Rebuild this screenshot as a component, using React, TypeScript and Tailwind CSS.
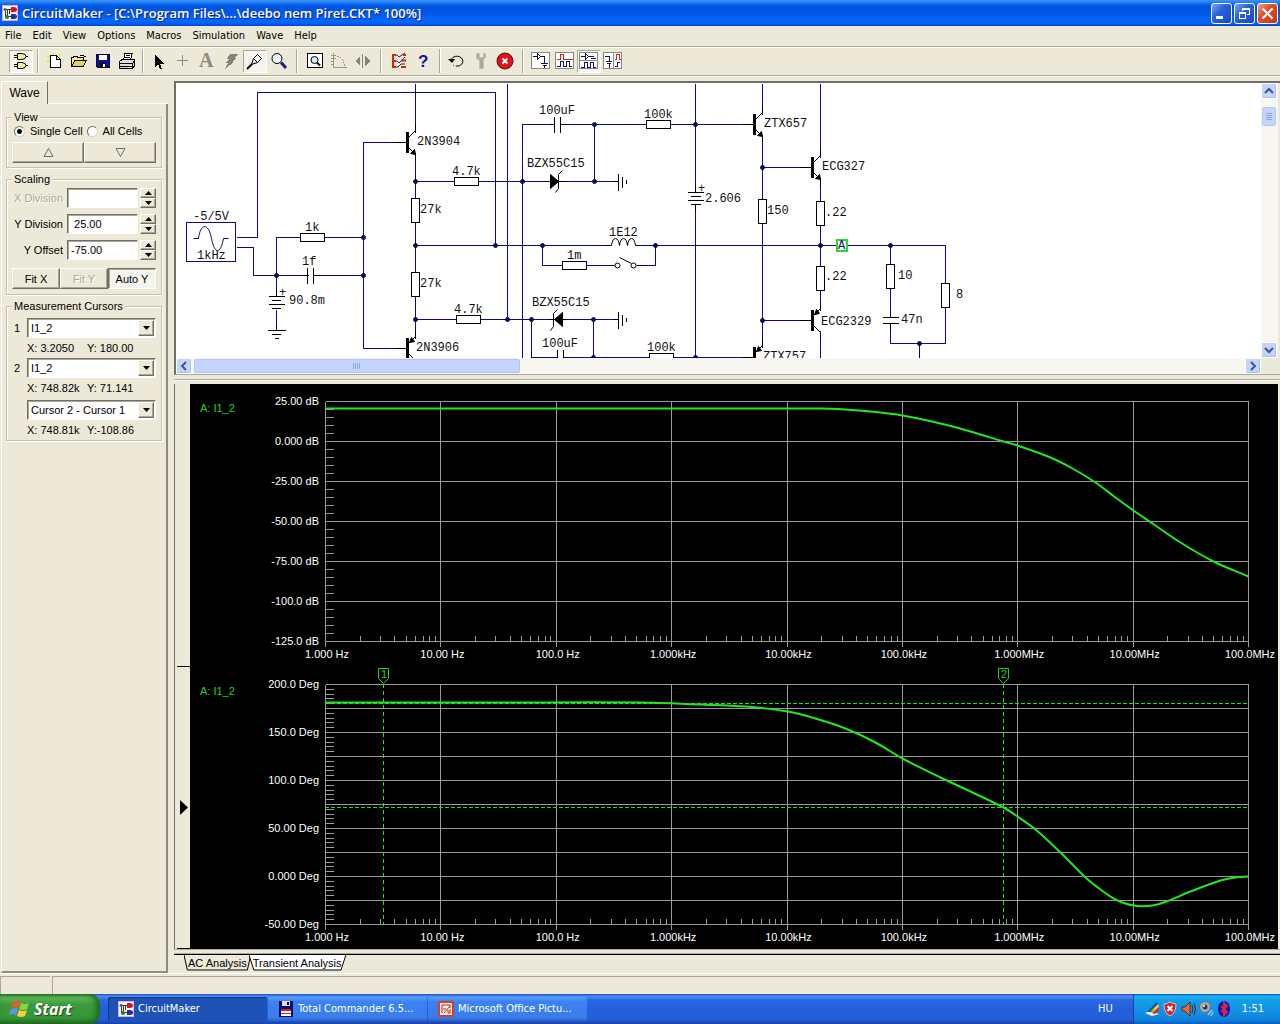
import type { ReactNode } from 'react';

const TAHOMA = "font-['DejaVu_Sans_Condensed','DejaVu_Sans',sans-serif]";
const RAISED = 'border border-t-white border-l-white border-r-[#716f64] border-b-[#716f64] shadow-[inset_-1px_-1px_0_#aca899]';
const SUNKEN = 'border border-t-[#716f64] border-l-[#716f64] border-r-white border-b-white shadow-[inset_1px_1px_0_#aca899]';

/* ---------- small pieces ---------- */

const Icon = ({ children }: { children: ReactNode }) => (
  <svg width="20" height="20" viewBox="0 0 20 20" fill="none" stroke="#000" shapeRendering="crispEdges" className="overflow-visible" aria-hidden="true">
    {children}
  </svg>
);

const AppIcon = () => (
  <svg width="16" height="16" viewBox="0 0 16 16" className="shrink-0" aria-hidden="true">
    <rect width="16" height="16" fill="#fdf1fa" />
    <path d="M0 .5H16M.5 0V16M15.500 0V16M0 15.500H16" stroke="#e7a6dc" />
    <path d="M2 4.500H9M5.500 4V11.500H10M7.500 4V9M3.500 5V12" stroke="#333" fill="none" shapeRendering="crispEdges" />
    <path d="M9 2H12Q15 2.500 15 4.500T12 7H9Z" fill="#d3122c" />
    <path d="M9 9H12Q15 9.500 15 11.500T12 14H9Z" fill="#1b31a8" />
    <circle cx="3" cy="4.500" r="1.500" fill="#18882c" /><circle cx="5" cy="12" r="2" fill="#18882c" />
  </svg>
);

/* ---------- title bar ---------- */

const TitleBar = () => (
  <header className="h-[26px] shrink-0 flex items-center px-0.5 bg-[linear-gradient(#3c95f8_0%,#2583f5_8%,#0054e3_22%,#0056e6_50%,#0266fd_75%,#0361f5_90%,#0043cf_100%)]">
    <AppIcon />
    <h1 className="flex-1 pl-1 whitespace-nowrap text-white font-semibold text-[13px] leading-[20px] font-['Open_Sans','Noto_Sans',sans-serif] [text-shadow:1px_1px_0_#0a1f8a]">
      CircuitMaker - [C:\Program Files\...\deebo nem Piret.CKT* 100%]
    </h1>
    <div className="flex gap-0.5">
      <button aria-label="Minimize" className="size-[21px] rounded-[3px] border border-white bg-[linear-gradient(135deg,#7ba4f2,#2a62dd_40%,#1846c4)]">
        <svg width="19" height="19" viewBox="0 0 19 19"><rect x="4" y="12" width="7" height="3" fill="#fff" /></svg>
      </button>
      <button aria-label="Restore" className="size-[21px] rounded-[3px] border border-white bg-[linear-gradient(135deg,#7ba4f2,#2a62dd_40%,#1846c4)]">
        <svg width="19" height="19" viewBox="0 0 19 19" fill="none" stroke="#fff" shapeRendering="crispEdges">
          <path d="M7 7V4.500H14.500V10.500H12M7 5.500H14" />
          <path d="M4.500 8.500H10.500V14.500H4.500ZM4 9.500H11" />
        </svg>
      </button>
      <button aria-label="Close" className="size-[21px] rounded-[3px] border border-white bg-[linear-gradient(135deg,#f0a088,#e0502a_40%,#c33a0c)]">
        <svg width="19" height="19" viewBox="0 0 19 19" stroke="#fff" strokeWidth="2"><path d="M4.500 4.500L14.500 14.500M14.500 4.500L4.500 14.500" /></svg>
      </button>
    </div>
  </header>
);

const MENU = ['File', 'Edit', 'View', 'Options', 'Macros', 'Simulation', 'Wave', 'Help'];

const MenuBar = () => (
  <nav className={`h-5 shrink-0 flex items-center gap-[11px] px-[5px] text-[11px] leading-[14px] ${TAHOMA}`}>
    {MENU.map((m) => <button key={m}>{m}</button>)}
  </nav>
);

/* ---------- toolbar ---------- */

const Tool = ({ label, on, children }: { label: string; on?: boolean; children: ReactNode }) => (
  <button
    aria-label={label}
    aria-pressed={on}
    className={`w-6 h-[23px] flex items-center justify-center border ${on ? 'bg-[#f6f4ee] border-t-[#aca899] border-l-[#aca899] border-r-white border-b-white' : 'border-transparent'}`}
  >
    <Icon>{children}</Icon>
  </button>
);

const Sep = ({ w }: { w: string }) => (
  <div className={`${w} flex justify-center`}><span className="w-0.5 h-6 border-l border-[#aca899] bg-white" /></div>
);

const PULSE = 'M2 15.500H5.500V10.500H8.500V15.500H11.500V10.500H14.500V15.500H17';

const Toolbar = () => (
  <div className="h-[30px] shrink-0 flex items-center pl-[9px] border-y border-[#aca899] shadow-[inset_0_1px_0_#fff,0_1px_0_#fff]">
    <Tool label="Digital mode" on>
      <path d="M6.500 2.500H11Q15 3 15 5.500T11 8.500H6.500ZM6.500 11.500H11Q15 12 15 14.500T11 17.500H6.500Z" fill="#f6ef9a" shapeRendering="auto" />
      <path d="M3 4.500H6M3 6.500H6M15 5.500H17M3 13.500H6M3 15.500H6M15 14.500H17" />
    </Tool>
    <Sep w="w-2.5" />
    <Tool label="New">
      <path d="M3 5L5 7M2 10H5M4 16L6 14M8 2V4M15 3L13 5M15 13L17 15" stroke="#ecec2c" strokeWidth="2" />
      <path d="M5.500 4.500H11.500L15.500 8.500V16.500H5.500ZM11.500 4.500V8.500H15.500" fill="#fff" />
    </Tool>
    <Tool label="Open">
      <path d="M2.500 15.500V6.500H4L5 5.500H8L9 6.500H14.500V9" fill="#f4ec7c" />
      <path d="M2.500 15.500L6 9.500H17.500L14 15.500Z" fill="#e2d060" /><path d="M11 4.500H14.500L16.500 6" />
    </Tool>
    <Tool label="Save">
      <path d="M3.500 3.500H16.500V16.500H5L3.500 15Z" fill="#10108a" stroke="#00004c" />
      <path d="M6 4H14V9H6Z" fill="#fff" stroke="none" /><path d="M7 12H13V16H7Z" fill="#111" stroke="none" /><path d="M10 13H12V16H10Z" fill="#fff" stroke="none" />
    </Tool>
    <Tool label="Print">
      <path d="M6.500 9.500L8 2.500H15L13.500 9.500Z" fill="#fff" /><path d="M9 4.500H13M8 6.500H13" />
      <path d="M2.500 10.500L5 8.500H17L17.500 10V15L15.500 17.500H2.500Z" fill="#ddd" /><path d="M2 12.500H15.500L17.500 10M15.500 12V17M2 15.500H15" />
    </Tool>
    <Sep w="w-2" />
    <Tool label="Select"><path d="M6 3V16L9 13L11 18H13L11 12.500H15Z" fill="#000" stroke="none" /></Tool>
    <Tool label="Wire"><path d="M9.500 4V15M4 9.500H15" stroke="#8d8b82" /></Tool>
    <Tool label="Text">
      <text x="2" y="16" fill="#8d8b82" stroke="none" fontSize="20" fontWeight="bold" fontFamily="Liberation Serif, serif">A</text>
    </Tool>
    <Tool label="Delete"><path d="M9 3H17L13 7H16L11 11H13L4 18L7 12H5L8 8H6Z" fill="#85837b" stroke="none" /></Tool>
    <Tool label="Probe" on>
      <g shapeRendering="auto"><path d="M2 18L7.500 12.500" strokeWidth="2" /><path d="M6.500 13.500L8.500 7.500L12.500 3.500L16.500 7.500L12.500 11.500ZM8.500 7.500L12.500 11.500" fill="#fff" /></g>
    </Tool>
    <Tool label="Zoom">
      <g shapeRendering="auto"><circle cx="8" cy="7.500" r="5" fill="#e4f6fa" /><path d="M12 11.500L17 17" stroke="#1a1a9c" strokeWidth="3" /></g>
    </Tool>
    <Sep w="w-3" />
    <Tool label="Zoom to fit">
      <path d="M2.500 2.500H17.500V16.500H2.500Z" fill="#fff" />
      <g shapeRendering="auto"><circle cx="9.500" cy="9" r="3.500" fill="#cdeff4" /><path d="M12 11.500L15 14.500" strokeWidth="2" /></g>
    </Tool>
    <Tool label="Rotate"><g stroke="#98968c"><path d="M4.500 2V16.500H18M2 4.500H7M2 7.500H7M2 10.500H5M2 13.500H5" /><path d="M8 5.500Q15 6 15.500 15" strokeDasharray="2 1" /></g></Tool>
    <Tool label="Mirror"><path d="M9.500 3V17" stroke="#85837b" /><path d="M7 5V15L2 10ZM12 5V15L17 10Z" fill="#85837b" stroke="none" /></Tool>
    <Sep w="w-3" />
    <Tool label="Check wiring">
      <path d="M2 3H17V17H2Z" stroke="#f0e68a" strokeDasharray="1 1" />
      <g shapeRendering="auto">
        <path d="M5 4H8L10 6L16 2M5 10H8L10 12L16 6M5 16H9L12 13H16" stroke="#22227c" />
        <path d="M4 4V16M3 4H7M3 10H7M3 16H7M14 4H17M12 9.500H17M12 16H17" stroke="#c8281e" strokeWidth="2" />
      </g>
    </Tool>
    <Tool label="Help"><text x="5" y="16" fill="#15159c" stroke="none" fontSize="17" fontWeight="bold" fontFamily="Liberation Sans, sans-serif">?</text></Tool>
    <Sep w="w-2.5" />
    <Tool label="Reset"><g shapeRendering="auto"><path d="M4.500 8A6 5 0 1 1 6 14" strokeDasharray="24 2" /><path d="M1 8H8L5 12Z" fill="#000" stroke="none" /></g></Tool>
    <Tool label="Step"><path d="M5 2V7L8 9V17H12V9L14 7V2H12V6H8V2Z" fill="#aaa89d" stroke="#c2c0b4" /></Tool>
    <Tool label="Stop"><g shapeRendering="auto"><circle cx="10" cy="10" r="8" fill="#d9141b" stroke="#6d0a0d" /><path d="M7.500 7.500L12.500 12.500M12.500 7.500L7.500 12.500" stroke="#fff" strokeWidth="2" /></g></Tool>
    <Sep w="w-3" />
    <Tool label="Schematic only">
      <path d="M.5 1.500H18.500V17.500H.5Z" fill="#fff" stroke="#888" /><path d="M2 5.500H6M6.500 3V8L10 5.500ZM10 5.500H13.500V12M10 12.500H17M12 14.500H16M13.500 14V17" stroke="#15154a" />
    </Tool>
    <Tool label="Waves only">
      <path d="M.5 1.500H18.500V17.500H.5Z" fill="#fff" stroke="#888" /><path d="M2 8.500H5.500V3.500H8.500V8.500H18" stroke="#d8281e" /><path d={PULSE} stroke="#15155c" />
    </Tool>
    <Tool label="Split horizontally" on>
      <path d="M.5 1.500H18.500V17.500H.5ZM0 9.500H18" fill="#fff" stroke="#888" /><path d="M2 5.500H6M6.500 3V8L10 5.500ZM10 5.500H14.500M12 7.500H17" stroke="#15154a" /><path d="M2 16.500H5.500V11.500H8.500V16.500H11.500V11.500H14.500V16.500H17" stroke="#15155c" />
    </Tool>
    <Tool label="Split vertically">
      <path d="M.5 1.500H18.500V17.500H.5ZM10.500 2V17" fill="#fff" stroke="#888" /><path d="M2 5.500H6.500V10M3 10.500H9M4 12.500H8M6.500 12V17" stroke="#15154a" /><path d="M12 8.500H13.500V3.500H16.500V8.500H18" stroke="#d8281e" /><path d="M12 15.500H14.500V11.500H17" stroke="#15155c" />
    </Tool>
  </div>
);

/* ---------- side panel ---------- */

const Group = ({ title, children }: { title: string; children: ReactNode }) => (
  <fieldset className="min-w-0 border border-[#c4c1b0] shadow-[1px_1px_0_#fff,inset_1px_1px_0_#fff] px-[5px]">
    <legend className="h-3 leading-3 px-0.5 bg-[#ece9d8]">{title}</legend>
    {children}
  </fieldset>
);

const Radio = ({ id, label, checked }: { id: string; label: string; checked?: boolean }) => (
  <span className="flex items-center gap-[5px]">
    <input
      type="radio"
      id={id}
      name="cells"
      defaultChecked={checked}
      className="appearance-none size-[11px] rounded-full bg-white border border-t-[#716f64] border-l-[#716f64] border-r-[#d8d5c8] border-b-[#d8d5c8] checked:bg-[radial-gradient(circle,#000_2px,#fff_3px)]"
    />
    <label htmlFor={id} className="whitespace-nowrap">{label}</label>
  </span>
);

const Arrow = ({ up }: { up?: boolean }) => (
  <svg width="7" height="4" viewBox="0 0 7 4" aria-hidden="true"><path d={up ? 'M0 4H7L3.500 0Z' : 'M0 0H7L3.500 4Z'} /></svg>
);

const Field = ({ id, label, value, off }: { id: string; label: string; value: string; off?: boolean }) => (
  <div className="flex items-center h-5">
    <label htmlFor={id} className={`flex-1 text-right pr-1 whitespace-nowrap ${off ? 'text-[#aca899] [text-shadow:1px_1px_0_#fff]' : ''}`}>{label}</label>
    <input id={id} defaultValue={value} disabled={off} className={`w-[71px] h-5 px-[3px] bg-white ${SUNKEN}`} />
    <span className="ml-0.5 w-4 h-5 flex flex-col">
      <button aria-label={`${label} up`} className={`flex-1 flex items-center justify-center ${RAISED}`}><Arrow up /></button>
      <button aria-label={`${label} down`} className={`flex-1 flex items-center justify-center ${RAISED}`}><Arrow /></button>
    </span>
  </div>
);

const Combo = ({ id, num, name, value }: { id: string; num?: string; name: string; value: string }) => (
  <div className="flex items-center h-5">
    <label htmlFor={id} className="w-[15px] pl-0.5">{num}</label>
    <div className="relative flex-1">
      <select id={id} aria-label={name} className={`block appearance-none w-full h-5 pl-[3px] leading-[18px] bg-white ${SUNKEN}`}><option>{value}</option></select>
      <span className={`absolute right-0.5 top-0.5 w-4 h-4 bg-[#ece9d8] flex items-center justify-center pointer-events-none ${RAISED}`}><Arrow /></span>
    </div>
  </div>
);

const Reading = ({ x, y }: { x: string; y: string }) => (
  <div className="h-5 flex items-center pl-[15px] whitespace-nowrap"><span className="w-[60px]">{x}</span><span>{y}</span></div>
);

const SidePanel = () => (
  <aside className="w-[168px] shrink-0 flex flex-col pl-px text-[11px] leading-[14px] font-['Liberation_Sans',Arial,sans-serif]">
    <div className="flex h-[23px]">
      <button className="w-[47px] text-[12px] border-l border-t border-white border-r border-r-[#716f64]">Wave</button>
      <span className="flex-1 border-b border-white" />
    </div>
    <div className="flex-1 flex flex-col gap-[5px] pt-[7px] pl-1 pr-1 border-l border-l-white border-r-2 border-r-[#8f8c7f] border-b-2 border-b-[#8f8c7f]">
      <Group title="View">
        <div className="flex items-center h-4 gap-1 pl-0.5">
          <Radio id="single" label="Single Cell" checked />
          <Radio id="all" label="All Cells" />
        </div>
        <div className="flex pt-[3px] pb-1">
          <button aria-label="Previous cell" className={`flex-1 h-[21px] flex items-center justify-center ${RAISED}`}>
            <svg width="11" height="9" viewBox="0 0 11 9" fill="none" stroke="#716f64"><path d="M1 8.500H10L5.500 .5Z" /></svg>
          </button>
          <button aria-label="Next cell" className={`flex-1 h-[21px] flex items-center justify-center ${RAISED}`}>
            <svg width="11" height="9" viewBox="0 0 11 9" fill="none" stroke="#716f64"><path d="M1 .5H10L5.500 8.500Z" /></svg>
          </button>
        </div>
      </Group>
      <Group title="Scaling">
        <div className="flex flex-col gap-1.5 pt-[3px]">
          <Field id="xdiv" label="X Division" value="" off />
          <Field id="ydiv" label="Y Division" value=" 25.00" />
          <Field id="yoff" label="Y Offset" value="-75.00" />
        </div>
        <div className="flex pt-2 pb-[5px]">
          <button className={`flex-1 h-[21px] ${RAISED}`}>Fit X</button>
          <button disabled className={`flex-1 h-[21px] text-[#aca899] [text-shadow:1px_1px_0_#fff] ${RAISED}`}>Fit Y</button>
          <button aria-pressed="true" className={`flex-1 h-[21px] whitespace-nowrap bg-[#f6f4ee] ${SUNKEN}`}>Auto Y</button>
        </div>
      </Group>
      <Group title="Measurement Cursors">
        <div className="pt-1.5">
          <Combo id="c1" num="1" name="Cursor 1" value="I1_2" />
          <Reading x="X: 3.2050" y="Y: 180.00" />
          <Combo id="c2" num="2" name="Cursor 2" value="I1_2" />
          <Reading x="X: 748.82k" y="Y: 71.141" />
        </div>
        <div className="pt-0.5">
          <Combo id="c3" name="Difference" value="Cursor 2 - Cursor 1" />
          <Reading x="X: 748.81k" y="Y:-108.86" />
        </div>
      </Group>
    </div>
  </aside>
);

/* ---------- schematic ---------- */

const ResH = ({ x, y }: { x: number; y: number }) => <rect x={x} y={y - 4} width="24" height="8" fill="#fff" />;
const ResV = ({ x, y }: { x: number; y: number }) => <rect x={x - 4} y={y} width="8" height="24" fill="#fff" />;

const Transistor = ({ x, y, pnp }: { x: number; y: number; pnp?: boolean }) => (
  <g shapeRendering="auto">
    <path d={`M${x - 20} ${y}H${x - 8}M${x} ${y - 18}V${y - 12}L${x - 7} ${y - 5}M${x - 7} ${y + 5}L${x} ${y + 12}V${y + 18}`} />
    <rect x={x - 9} y={y - 10} width="2" height="20" fill="#000" />
    <path d={pnp ? `M${x - 6} ${y - 6}L${x - 4} ${y - 11}L${x - 1} ${y - 7}Z` : `M${x} ${y + 12}L${x - 5} ${y + 11}L${x - 1} ${y + 7}Z`} fill="#000" />
  </g>
);

const WIRES = [
  'M236 237H257V92H495V245', 'M236 247H253V275H308M313 275H363', 'M276 290V237H363',
  'M407 142H363V348H407', 'M415 83V348', 'M415 181H618', 'M415 245H610M635 245H945V343H890V324M890 245V317',
  'M415 319H618', 'M507 83V319', 'M554 124H522V358M560 124H754', 'M594 124V181', 'M695 83V188M695 205V358',
  'M542 245V265H614M636 265H655V245', 'M531 319V357H557M563 357H754', 'M593 319V357', 'M762 83V358',
  'M820 83V358', 'M762 167H811M762 320H811', 'M919 343V358', 'M276 309V329',
];

const DOTS = [
  [276, 275], [363, 237], [363, 275], [415, 181], [415, 245], [415, 319], [495, 245], [507, 319], [522, 181], [531, 319],
  [594, 124], [594, 181], [593, 319], [593, 357], [695, 124], [695, 357], [542, 245], [655, 245], [762, 167], [762, 320],
  [820, 245], [890, 245], [919, 343],
];

const PARTS: [number, number, string][] = [
  [193, 220, '-5/5V'], [197, 259, '1kHz'], [305, 231, '1k'], [302, 265, '1f'], [289, 304, '90.8m'], [279, 296, '+'],
  [417, 145, '2N3904'], [452, 175, '4.7k'], [420, 213, '27k'], [420, 287, '27k'], [454, 313, '4.7k'], [416, 351, '2N3906'],
  [539, 114, '100uF'], [527, 167, 'BZX55C15'], [644, 118, '100k'], [705, 202, '2.606'], [698, 192, '+'], [609, 236, '1E12'],
  [567, 259, '1m'], [532, 306, 'BZX55C15'], [542, 347, '100uF'], [647, 351, '100k'], [764, 127, 'ZTX657'], [822, 170, 'ECG327'],
  [767, 214, '150'], [825, 216, '.22'], [825, 280, '.22'], [821, 325, 'ECG2329'], [763, 360, 'ZTX757'], [898, 279, '10'],
  [901, 323, '47n'], [956, 298, '8'],
];

const Schematic = () => (
  <svg width="1085" height="275" viewBox="176 83 1085 275" aria-label="Schematic" className="font-['Liberation_Mono','Courier_New',monospace] text-[12px]">
    <g transform="translate(.5 .5)" fill="none" stroke="#000" shapeRendering="crispEdges">
      <g stroke="#0a0a8c">
        {WIRES.map((d) => <path key={d} d={d} />)}
        <rect x="186" y="222" width="49" height="39" />
        <path d="M193 238H198C200 222 208 222 211 238S220 254 223 238H228" shapeRendering="auto" />
      </g>
      {DOTS.map(([x, y]) => <circle key={`${x}-${y}`} cx={x} cy={y} r="2" fill="#0c0c5c" stroke="#0c0c5c" shapeRendering="auto" />)}
      <ResH x={300} y={237} /><ResH x={454} y={181} /><ResH x={456} y={319} /><ResH x={646} y={124} /><ResH x={562} y={265} /><ResH x={649} y={357} />
      <ResV x={415} y={198} /><ResV x={415} y={272} /><ResV x={762} y={199} /><ResV x={820} y={201} /><ResV x={820} y={266} /><ResV x={890} y={264} /><ResV x={945} y={283} />
      {/* the wires between collector and emitter are hidden under the transistor bodies */}
      <path d="M415 132V152M415 338V358M762 114V134M762 347V358M820 157V177M820 310V330" stroke="#fff" strokeWidth="3" />
      <Transistor x={415} y={142} /><Transistor x={415} y={348} pnp /><Transistor x={762} y={124} /><Transistor x={762} y={357} pnp />
      <Transistor x={820} y={167} /><Transistor x={820} y={320} pnp />
      {/* capacitors */}
      <path d="M307 267V283M313 267V283M302 275H307M313 275H319M554 116V132M560 116V132M549 124H554M560 124H566M557 349V358M563 349V358M882 317H898M882 323H898M890 312V317M890 323V329" />
      {/* batteries */}
      <path d="M268 296H284M271 300H280M268 304H284M271 308H280M276 289V296M687 192H703M690 196H700M687 200H703M690 204H700M695 186V192M695 204V210" />
      {/* grounds */}
      <path d="M276 325V330M267 330H285M271 334H280M274 338H278M613 181H618M618 173V190M622 176V187M626 179V183M613 319H618M618 311V328M622 314V325M626 317V321" />
      {/* zeners */}
      <g shapeRendering="auto">
        <path d="M545 181H566M550 174V188L558 181Z" fill="#000" /><path d="M562 170L558 174V188L555 192" />
        <path d="M548 319H568M562 312V326L554 319Z" fill="#000" /><path d="M557 309L553 313V326L550 330" />
        <path d="M606 245H611Q612 238 615 238T619 245Q620 238 623 238T627 245Q628 238 631 238T635 245H640" />
        <path d="M609 265H614M619 257L631 263M636 265H641" />
        <circle cx="617" cy="265" r="2.500" fill="#fff" /><circle cx="633" cy="265" r="2.500" fill="#fff" />
      </g>
      <rect x="836" y="239" width="10" height="11" fill="#fff" stroke="#2bd82b" strokeWidth="2" />
    </g>
    {PARTS.map(([x, y, t]) => <text key={`${x}-${y}`} x={x} y={y} fill="#111">{t}</text>)}
    <text x="838" y="249" fill="#10107c">A</text>
  </svg>
);

const ScrollButton = ({ label, d }: { label: string; d: string }) => (
  <button aria-label={label} className="size-4 shrink-0 rounded-[2px] border border-white bg-[#c3d5fd] shadow-[inset_-1px_-1px_0_#a9bfee]">
    <svg width="14" height="14" viewBox="0 0 14 14" fill="none" stroke="#3f5683" strokeWidth="2"><path d={d} /></svg>
  </button>
);

const SchematicPane = () => (
  <div className="shrink-0 pr-0.5 bg-[#ece9d8] border-t-2 border-l-2 border-t-[#716f64] border-l-[#716f64] border-b border-b-[#aca899]">
    <div className="flex h-[275px] bg-white">
      <div className="flex-1 min-w-0 overflow-hidden"><Schematic /></div>
      <div className="w-[17px] pr-px flex flex-col bg-[#f7f6f1]">
        <ScrollButton label="Scroll up" d="M3 9L7 5L11 9" />
        <div className="flex-1 pt-2">
          <div className="h-[19px] mx-px rounded-[2px] bg-[#c3d5fd] border border-[#b4c8f6] flex flex-col items-center justify-center gap-px">
            <i className="w-1.5 h-px bg-[#8caae8]" /><i className="w-1.5 h-px bg-[#8caae8]" /><i className="w-1.5 h-px bg-[#8caae8]" /><i className="w-1.5 h-px bg-[#8caae8]" />
          </div>
        </div>
        <ScrollButton label="Scroll down" d="M3 5L7 9L11 5" />
      </div>
    </div>
    <div className="flex h-4 bg-[#f7f6f1]">
      <ScrollButton label="Scroll left" d="M9 3L5 7L9 11" />
      <div className="flex-1 pl-0.5 py-px flex">
        <div className="w-[31%] rounded-[2px] bg-[#c3d5fd] border border-[#b0c6f8] flex items-center justify-center gap-px">
          <i className="h-1.5 w-px bg-[#8caae8]" /><i className="h-1.5 w-px bg-[#8caae8]" /><i className="h-1.5 w-px bg-[#8caae8]" /><i className="h-1.5 w-px bg-[#8caae8]" />
        </div>
      </div>
      <ScrollButton label="Scroll right" d="M5 3L9 7L5 11" />
      <div className="w-[17px] bg-[#ece9d8]" />
    </div>
  </div>
);

/* ---------- wave plots ---------- */

const X0 = 325;
const X1 = 1248;
const DECADE = (X1 - X0) / 8;
const FREQS = ['1.000 Hz', '10.00 Hz', '100.0 Hz', '1.000kHz', '10.00kHz', '100.0kHz', '1.000MHz', '10.00MHz', '100.0MHz'];

const GAIN = [
  [325, 408], [500, 408], [700, 408], [820, 408], [845, 409], [870, 411], [902, 415], [940, 423], [970, 431], [1003, 441], [1017, 445],
  [1050, 457], [1072, 468], [1095, 482], [1115, 497], [1133, 510], [1155, 525], [1180, 542], [1213, 561], [1248, 576],
];
const PHASE = [
  [325, 702], [500, 702], [640, 702], [700, 704], [745, 706], [787, 711], [815, 718], [845, 728], [875, 742], [902, 758], [940, 777], [970, 791],
  [1003, 807], [1017, 816], [1035, 829], [1060, 852], [1085, 877], [1100, 889], [1115, 899], [1133, 905], [1152, 905], [1166, 901], [1190, 891],
  [1220, 880], [1235, 877], [1248, 876],
];

// Catmull-Rom through the sampled points
const smooth = (p: number[][]) => {
  let d = `M${p[0][0]} ${p[0][1]}`;
  for (let i = 0; i < p.length - 1; i++) {
    const a = p[i - 1] ?? p[i];
    const b = p[i];
    const c = p[i + 1];
    const e = p[i + 2] ?? c;
    const k = (c[0] - b[0]) / 3;
    const m1 = (c[1] - a[1]) / (c[0] - a[0]);
    const m2 = (e[1] - b[1]) / (e[0] - b[0]);
    d += `C${b[0] + k} ${b[1] + k * m1} ${c[0] - k} ${c[1] - k * m2} ${c[0]} ${c[1]}`;
  }
  return d;
};

type PlotProps = { top: number; labels: string[]; rows: number; minor: number; points: number[][] };

const Plot = ({ top, labels, rows, minor, points }: PlotProps) => {
  const bottom = top + 240;
  const step = 240 / (labels.length - 1);
  let grid = '';
  for (let i = 0; i <= rows; i++) grid += `M${X0} ${top + (240 / rows) * i}H${X1}`;
  for (let i = 0; i <= 8; i++) grid += `M${Math.round(X0 + DECADE * i)} ${top}V${bottom + 5}`;
  let ticks = '';
  for (let i = 1; i < minor; i++) ticks += `M${X0} ${Math.round(top + (240 / minor) * i)}h8`;
  for (let i = 0; i < 8; i++) {
    for (let n = 2; n < 10; n++) ticks += `M${Math.round(X0 + DECADE * (i + Math.log10(n)))} ${bottom}v-6`;
  }
  return (
    <g>
      <g transform="translate(.5 .5)" fill="none">
        <path d={grid} stroke="#999" shapeRendering="crispEdges" />
        <path d={ticks} stroke="#999" shapeRendering="crispEdges" />
        <path d={smooth(points)} stroke="#1fe81f" strokeWidth="2" />
      </g>
      <text x="200" y={top + 11} fill="#22d022">A: I1_2</text>
      <g fill="#fff">
        {labels.map((l, i) => <text key={l} x="319" y={top + step * i + 4} textAnchor="end">{l}</text>)}
        {FREQS.map((f, i) => <text key={f} x={X0 + DECADE * i + 2} y={bottom + 17} textAnchor="middle">{f}</text>)}
      </g>
    </g>
  );
};

const Cursor = ({ x, n }: { x: number; n: string }) => (
  <g>
    <path transform="translate(.5 .5)" d={`M${x - 5} 668H${x + 5}V678L${x} 683L${x - 5} 678Z`} fill="none" stroke="#22d022" />
    <path transform="translate(.5 0)" d={`M${x} 684V924`} stroke="#22e022" strokeDasharray="4 3" shapeRendering="crispEdges" />
    <text x={x + 1} y="678" fill="#22d022" textAnchor="middle">{n}</text>
  </g>
);

const WavePane = () => (
  <div className="flex-1 min-h-0 flex pl-0.5 border-l border-l-[#716f64]">
    <div className="w-[13px] flex flex-col">
      <div className="flex-1 border-b border-black" />
      <div className="flex-1 border-b border-black flex items-center pl-[3px]">
        <svg width="8" height="15" viewBox="0 0 8 15"><path d="M0 0L8 7.500L0 15Z" /></svg>
      </div>
    </div>
    <div className="flex-1 min-w-0 bg-black mr-0.5 overflow-hidden">
      <svg
        viewBox="190 384 1088 565"
        preserveAspectRatio="xMinYMin meet"
        className="w-full h-full text-[11px] font-['Liberation_Sans',Arial,sans-serif]"
        aria-label="AC analysis"
      >
        <Plot top={401} labels={['25.00 dB', '0.000 dB', '-25.00 dB', '-50.00 dB', '-75.00 dB', '-100.0 dB', '-125.0 dB']} rows={6} minor={30} points={GAIN} />
        <Plot top={684} labels={['200.0 Deg', '150.0 Deg', '100.0 Deg', '50.00 Deg', '0.000 Deg', '-50.00 Deg']} rows={10} minor={50} points={PHASE} />
        <path d={`M${X0} 703.500H${X1}M${X0} 807.500H${X1}`} stroke="#22e022" strokeDasharray="4 2" shapeRendering="crispEdges" />
        <Cursor x={383} n="1" />
        <Cursor x={1003} n="2" />
      </svg>
    </div>
  </div>
);

const SheetTab = ({ label, on }: { label: string; on?: boolean }) => (
  <button className="relative h-4 px-1 -mr-0.5 whitespace-nowrap">
    <svg className="absolute inset-0 w-full h-full" viewBox="0 0 100 16" preserveAspectRatio="none" aria-hidden="true">
      <path d="M0 0L5 15H95L100 0" fill={on ? '#fff' : '#ece9d8'} stroke="#000" vectorEffect="non-scaling-stroke" />
    </svg>
    <span className="relative">{label}</span>
  </button>
);

/* ---------- taskbar ---------- */

const TaskButton = ({ label, on, icon }: { label: string; on?: boolean; icon: ReactNode }) => (
  <button
    className={`w-[159px] h-6 flex items-center gap-1 px-2.5 rounded-[2px] whitespace-nowrap ${on ? 'bg-[#1e52b7] shadow-[inset_1px_1px_1px_#123a8c]' : 'bg-[linear-gradient(#5a9bff,#3c81f0_20%,#3a7dea_85%,#2a62cf)]'}`}
  >
    {icon}
    {label}
  </button>
);

const Taskbar = () => (
  <footer className={`h-[30px] shrink-0 flex items-center text-white text-[11px] leading-[14px] bg-[linear-gradient(#1f4fc0_0%,#4a8ef6_8%,#2a68e4_20%,#245edb_50%,#245edb_85%,#1941a5_100%)] ${TAHOMA}`}>
    <button className="h-full w-[100px] flex items-center gap-1 pl-2 rounded-r-[10px] bg-[linear-gradient(#2f7a2f,#5fb95a_12%,#3c9a3c_35%,#379637_80%,#236b23)] shadow-[inset_-4px_0_6px_#1c6a1c]">
      <svg width="24" height="22" viewBox="0 0 24 22" aria-hidden="true">
        <path d="M5 4Q9 1 12 4L10 10Q7 8 3 10Z" fill="#ea5a2c" />
        <path d="M13 5Q17 7 21 5L19 11Q15 13 11 11Z" fill="#8fd23c" />
        <path d="M3 11Q7 9 10 11L8 17Q5 15 1 17Z" fill="#5b93f2" />
        <path d="M11 12Q15 14 19 12L17 18Q13 20 9 18Z" fill="#f7cf3a" />
      </svg>
      <span className="-ml-0.5 font-bold italic text-[16px] leading-5 font-['Open_Sans','Noto_Sans',sans-serif] [text-shadow:1px_1px_1px_#1a4a1a]">Start</span>
    </button>
    <div className="flex-1 flex gap-px pl-2">
      <TaskButton label="CircuitMaker" on icon={<AppIcon />} />
      <TaskButton
        label="Total Commander 6.5..."
        icon={
          <svg width="16" height="16" viewBox="0 0 16 16" shapeRendering="crispEdges" aria-hidden="true">
            <path d="M1 0H15V16H1Z" fill="#0a0a70" /><path d="M4 0H12V5H4Z" fill="#ddd" /><path d="M9 1H11V4H9Z" fill="#0a0a50" />
            <path d="M3 8H13V15H3Z" fill="#fff" /><path d="M3 8H13V10H3ZM3 12H13V13H3Z" fill="#cf2020" />
          </svg>
        }
      />
      <TaskButton
        label="Microsoft Office Pictu..."
        icon={
          <svg width="16" height="16" viewBox="0 0 16 16" aria-hidden="true">
            <rect width="16" height="16" rx="1" fill="#c8452c" /><rect x="2" y="2" width="12" height="12" fill="#fbe8e2" />
            <path d="M4 12V4H12V7M5 8H8M6 12L12 5M10 9V12H12V8" stroke="#b5301c" fill="none" />
          </svg>
        }
      />
    </div>
    <span className="pr-5">HU</span>
    <div className="h-full flex items-center gap-0.5 pl-2.5 pr-4 border-l border-l-[#0d3f9c] bg-[linear-gradient(#0c59b9,#18b2f2_8%,#139ee9_20%,#1290e8_60%,#0d7fd6_88%,#095bc9)]">
      <svg width="16" height="16" viewBox="0 0 16 16" aria-hidden="true">
        <path d="M1 12L7 10L15 13L8 15Z" fill="#eee" /><path d="M3 11L13 1L14 3L7 11Z" fill="#2434c8" /><path d="M5 12L14 3L15 6L9 12Z" fill="#e8d92c" /><path d="M8 12L15 6V9L11 13Z" fill="#d22" /><path d="M5 11L12 4L8 11Z" fill="#2a2" />
      </svg>
      <svg width="16" height="16" viewBox="0 0 16 16" aria-hidden="true">
        <path d="M8 1Q11 3 14 3Q14 12 8 15Q2 12 2 3Q5 3 8 1Z" fill="#d3202a" stroke="#e9b9b9" /><path d="M5.500 5L10.500 10M10.500 5L5.500 10" stroke="#fff" strokeWidth="2" />
      </svg>
      <svg width="16" height="16" viewBox="0 0 16 16" aria-hidden="true">
        <path d="M2 6H5L10 1V15L5 10H2Z" fill="#e0703a" stroke="#5a2a16" /><path d="M12 4Q14 8 12 12M14 2Q17 8 14 14" stroke="#4a2a20" fill="none" />
      </svg>
      <svg width="16" height="16" viewBox="0 0 16 16" aria-hidden="true">
        <circle cx="7" cy="6" r="5.500" fill="#a9adb2" stroke="#6b6f75" /><circle cx="7" cy="6" r="2.500" fill="#3b3f46" /><circle cx="6" cy="5" r="1" fill="#fff" /><path d="M10 14L14 9M13 15L15 11" stroke="#8fc4f8" strokeWidth="1.500" />
      </svg>
      <svg width="16" height="16" viewBox="0 0 16 16" aria-hidden="true">
        <ellipse cx="8" cy="8" rx="6" ry="8" fill="#1313b8" /><path d="M5 5L11 11L8 14V2L11 5L5 11" fill="none" stroke="#d8283c" strokeWidth="2" />
      </svg>
      <time className="pl-2">1:51</time>
    </div>
  </footer>
);

export default function App() {
  return (
    <div className="h-screen flex flex-col overflow-hidden bg-[#ece9d8] text-black">
      <TitleBar />
      <MenuBar />
      <Toolbar />
      <main className="flex-1 min-h-0 flex gap-1.5 pt-[5px]">
        <SidePanel />
        <section className="flex-1 min-w-0 flex flex-col">
          <SchematicPane />
          <div className="h-[9px] shrink-0 flex flex-col justify-center"><span className="h-0.5 bg-[#aca899] border-b border-white" /></div>
          <WavePane />
          <div className="h-[5px] shrink-0 border-y border-y-[#aca899]" />
          <div className="h-[19px] shrink-0 flex items-start border-t border-black pl-2.5 text-[11px] leading-[14px] font-['Liberation_Sans',Arial,sans-serif]">
            <SheetTab label="AC Analysis" />
            <SheetTab label="Transient Analysis" on />
          </div>
        </section>
      </main>
      <div className="h-[21px] shrink-0 flex gap-0.5 pt-0.5 border-t border-white">
        <span className="w-[50px] border-t border-l border-[#aca899]" />
        <span className="flex-1 border-t border-l border-[#aca899]" />
      </div>
      <Taskbar />
    </div>
  );
}
